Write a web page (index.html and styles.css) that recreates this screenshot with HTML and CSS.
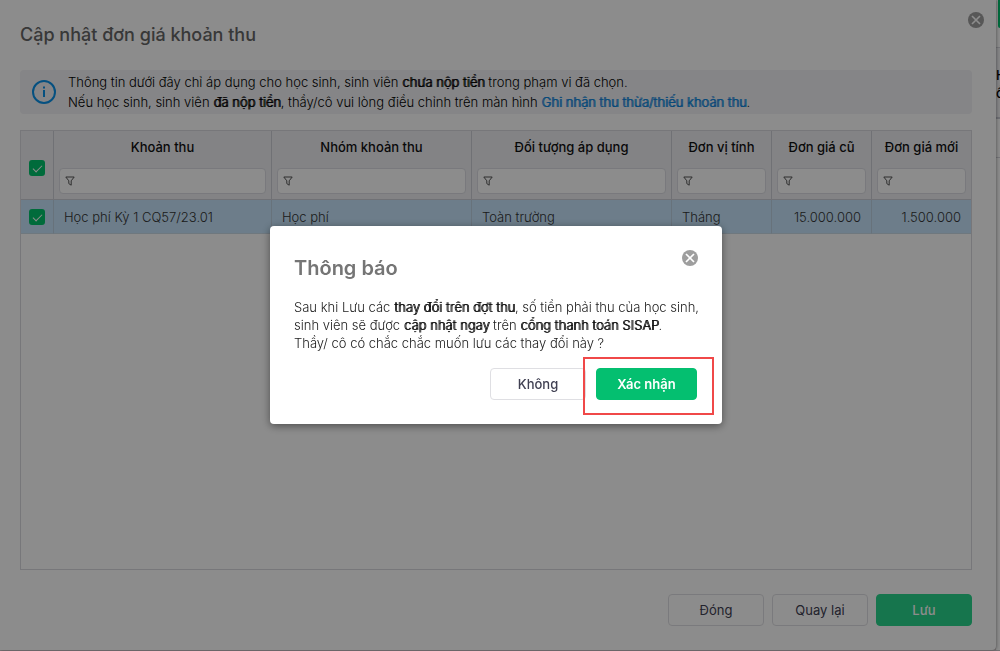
FILE: index.html
```html
<!DOCTYPE html>
<html lang="vi">
<head>
<meta charset="utf-8">
<title>Cập nhật đơn giá khoản thu</title>
<link rel="stylesheet" href="styles.css">
</head>
<body>
<svg class="defs" aria-hidden="true">
  <symbol id="funnel" viewBox="0 0 10 10"><path d="M.8 1h8.4L6.2 4.8v4.4L3.8 7.600V4.800z" fill="none" stroke="currentColor" stroke-linejoin="round"/></symbol>
  <symbol id="close" viewBox="0 0 16 16"><circle cx="8" cy="8" r="8" fill="currentColor"/><path d="M4 4l8 8m0-8l-8 8" stroke="#fff" stroke-width="1.700"/></symbol>
</svg>
<div class="page">
  <section class="editor" aria-labelledby="editor-title">
    <button class="close editor-close" aria-label="Đóng cửa sổ"><svg><use href="#close"/></svg></button>
    <h1 class="editor-title" id="editor-title">Cập nhật đơn giá khoản thu</h1>
    <div class="notice">
      <svg class="info" viewBox="0 0 24 24"><circle cx="12" cy="12" r="11" fill="none" stroke="currentColor" stroke-width="2"/><path d="M12 10v7M12 6.500v2" stroke="currentColor" stroke-width="2"/></svg>
      <p class="notice-text">Thông tin dưới đây chỉ áp dụng cho học sinh, sinh viên <strong>chưa nộp tiền</strong> trong phạm vi đã chọn.<br>Nếu học sinh, sinh viên <strong>đã nộp tiền</strong>, thầy/cô vui lòng điều chỉnh trên màn hình <a href="#">Ghi nhận thu thừa/thiếu khoản thu</a>.</p>
    </div>
    <div class="grid">
      <table class="fees">
        <colgroup><col class="col-check"><col><col class="col-wide"><col class="col-wide"><col class="col-narrow"><col class="col-narrow"><col class="col-last"></colgroup>
        <thead>
          <tr>
            <th class="check"><input type="checkbox" checked aria-label="Chọn tất cả"></th>
            <th><span class="heading">Khoản thu</span><label class="filter"><svg><use href="#funnel"/></svg><input type="text" aria-label="Lọc khoản thu"></label></th>
            <th><span class="heading">Nhóm khoản thu</span><label class="filter"><svg><use href="#funnel"/></svg><input type="text" aria-label="Lọc nhóm khoản thu"></label></th>
            <th><span class="heading">Đối tượng áp dụng</span><label class="filter"><svg><use href="#funnel"/></svg><input type="text" aria-label="Lọc đối tượng áp dụng"></label></th>
            <th><span class="heading">Đơn vị tính</span><label class="filter"><svg><use href="#funnel"/></svg><input type="text" aria-label="Lọc đơn vị tính"></label></th>
            <th><span class="heading">Đơn giá cũ</span><label class="filter"><svg><use href="#funnel"/></svg><input type="text" aria-label="Lọc đơn giá cũ"></label></th>
            <th><span class="heading">Đơn giá mới</span><label class="filter"><svg><use href="#funnel"/></svg><input type="text" aria-label="Lọc đơn giá mới"></label></th>
          </tr>
        </thead>
        <tbody>
          <tr>
            <td class="check"><input type="checkbox" checked aria-label="Chọn học phí"></td>
            <td>Học phí Kỳ 1 CQ57/23.01</td>
            <td>Học phí</td>
            <td>Toàn trường</td>
            <td>Tháng</td>
            <td class="number">15.000.000</td>
            <td class="number">1.500.000</td>
          </tr>
        </tbody>
      </table>
    </div>
    <footer class="actions">
      <button class="btn">Đóng</button>
      <button class="btn">Quay lại</button>
      <button class="btn btn-save">Lưu</button>
    </footer>
  </section>
  <aside class="behind">
    <div class="behind-button"></div>
    <div class="behind-head">H<br>ồ</div>
    <div class="behind-row"></div>
  </aside>
</div>
<div class="scrim">
  <section class="dialog" role="dialog" aria-modal="true" aria-labelledby="dialog-title">
    <header class="dialog-head">
      <h2 class="dialog-title" id="dialog-title">Thông báo</h2>
      <button class="close" aria-label="Đóng thông báo"><svg><use href="#close"/></svg></button>
    </header>
    <p class="dialog-text">Sau khi Lưu các <strong>thay đổi trên đợt thu</strong>, số tiền phải thu của học sinh,<br>sinh viên sẽ được <strong>cập nhật ngay</strong> trên <strong>cổng thanh toán SISAP</strong>.<br>Thầy/ cô có chắc chắc muốn lưu các thay đổi này ?</p>
    <footer class="dialog-actions">
      <button class="btn btn-cancel">Không</button>
      <div class="confirm"><button class="btn btn-confirm">Xác nhận</button></div>
    </footer>
  </section>
</div>
</body>
</html>
```
FILE: styles.css
```css
* { box-sizing: border-box; }
body { margin: 0; font: 300 13px/20px Inter, "Noto Sans", sans-serif; color: #111; background: #fff; }
h1, h2, p { margin: 0; }
button, input { font: inherit; }
strong, .notice-text a { font-weight: 300; text-shadow: 1px 0 0 currentColor; }
.defs { position: absolute; width: 0; height: 0; }

.page { display: flex; height: 100vh; overflow: hidden; padding-bottom: 1px; background: #d8d0d4; }
.editor { position: relative; flex: 1; min-width: 0; display: flex; flex-direction: column; padding: 21px 24px 24px 20px; background: #fff; border-radius: 0 0 4px 0; box-shadow: 1px 0 3px rgba(0, 0, 0, .3); }
.editor-title { font-size: 18px; line-height: 28px; font-weight: 500; color: #666; }
.close { flex: none; width: 16px; height: 16px; padding: 0; border: 0; background: none; color: #9e9e9e; }
.close svg { display: block; width: 16px; height: 16px; }
.editor-close { position: absolute; top: 12px; right: 12px; }

.notice { display: flex; align-items: center; gap: 12px; margin-top: 21px; padding: 2px 12px; background: #f3f3f6; border-radius: 4px; }
.info { flex: none; width: 24px; height: 24px; color: #0a92ea; }
.notice-text { color: #000; }
.notice-text a { color: #0a84dc; text-decoration: none; }

.grid { flex: 1; min-height: 0; margin-top: 16px; border: 1px solid #d9d9df; }
.fees { width: 100%; table-layout: fixed; border-collapse: separate; border-spacing: 0; }
.col-check { width: 33px; }
.col-wide { width: 200px; }
.col-narrow { width: 100px; }
.col-last { width: 99px; }
.fees th { height: 69px; padding: 6px 5px 5px; font-weight: 500; vertical-align: top; background: #eeeef2; border-right: 1px solid #cdced6; border-bottom: 1px solid #cdced6; }
.fees td { height: 34px; padding: 0 10px; color: #333; background: #c6e4fb; border-right: 1px solid #bccfe0; border-bottom: 1px solid #cbdae6; }
.fees th:last-child, .fees td:last-child { border-right: 0; }
.fees .check { padding: 6px 0 0; text-align: center; vertical-align: middle; }
.fees td.check { padding: 0; }
.fees .number { text-align: right; }
.check input { appearance: none; display: block; width: 16px; height: 16px; margin: 0 auto; border-radius: 3px; background: #00c46c; position: relative; }
.check input::after { content: ""; position: absolute; left: 6px; top: 3px; width: 4px; height: 8px; border: solid #fff; border-width: 0 1px 1px 0; transform: rotate(45deg); }
.heading { display: block; margin-bottom: 11px; }
.filter { display: flex; align-items: center; gap: 4px; height: 26px; padding: 0 5px; border: 1px solid #dcdde3; border-radius: 4px; background: #fff; }
.filter svg { flex: none; width: 10px; height: 10px; color: #555; }
.filter input { flex: 1; min-width: 0; width: 0; padding: 0; border: 0; outline: 0; background: none; }

.actions { display: flex; justify-content: flex-end; gap: 8px; margin-top: 24px; }
.btn { min-width: 96px; height: 32px; padding: 0 16px; border: 1px solid #dfdfe3; border-radius: 4px; background: #fff; color: #404052; font-weight: 400; }
.btn-save { border-color: #29d58c; background: #29d58c; color: #fff; font-weight: 500; }

.behind { flex: none; width: 4px; overflow: hidden; background: #fff; font-weight: 500; line-height: 18px; }
.behind-button { height: 28px; margin-left: 2px; background: #00c16e; border-radius: 0 0 0 4px; }
.behind-head { height: 72px; margin-top: 19px; padding-top: 18px; background: #f3f3f6; border-top: 1px solid #d5d5dc; border-bottom: 2px solid #cacbd4; color: #000; }
.behind-row { height: 39px; border-bottom: 1px solid #d5d5dc; }

.scrim { position: fixed; inset: 0; display: flex; align-items: center; justify-content: center; padding: 0 8px 2px 0; background: rgba(0, 0, 0, .45); }
.dialog { width: 452px; padding: 24px; background: #fff; border-radius: 4px; box-shadow: 0 2px 8px rgba(0, 0, 0, .45); }
.dialog-head { display: flex; justify-content: space-between; }
.dialog-title { padding-top: 4px; font-size: 20px; line-height: 28px; font-weight: 600; color: #757575; }
.dialog-text { margin-top: 16px; line-height: 18px; color: #222; white-space: nowrap; }
.dialog-text strong { color: #111; }
.dialog-actions { display: flex; justify-content: flex-end; gap: 10px; margin-top: 16px; }
.btn-cancel { font-weight: 500; }
.confirm { position: relative; margin-right: 1px; }
.confirm::after { content: ""; position: absolute; inset: -11px -17px -15px -13px; border: 2px solid #f04848; pointer-events: none; }
.btn-confirm { width: 101px; border-color: #04bf70; background: #04bf70; color: #fff; font-weight: 600; }
```
